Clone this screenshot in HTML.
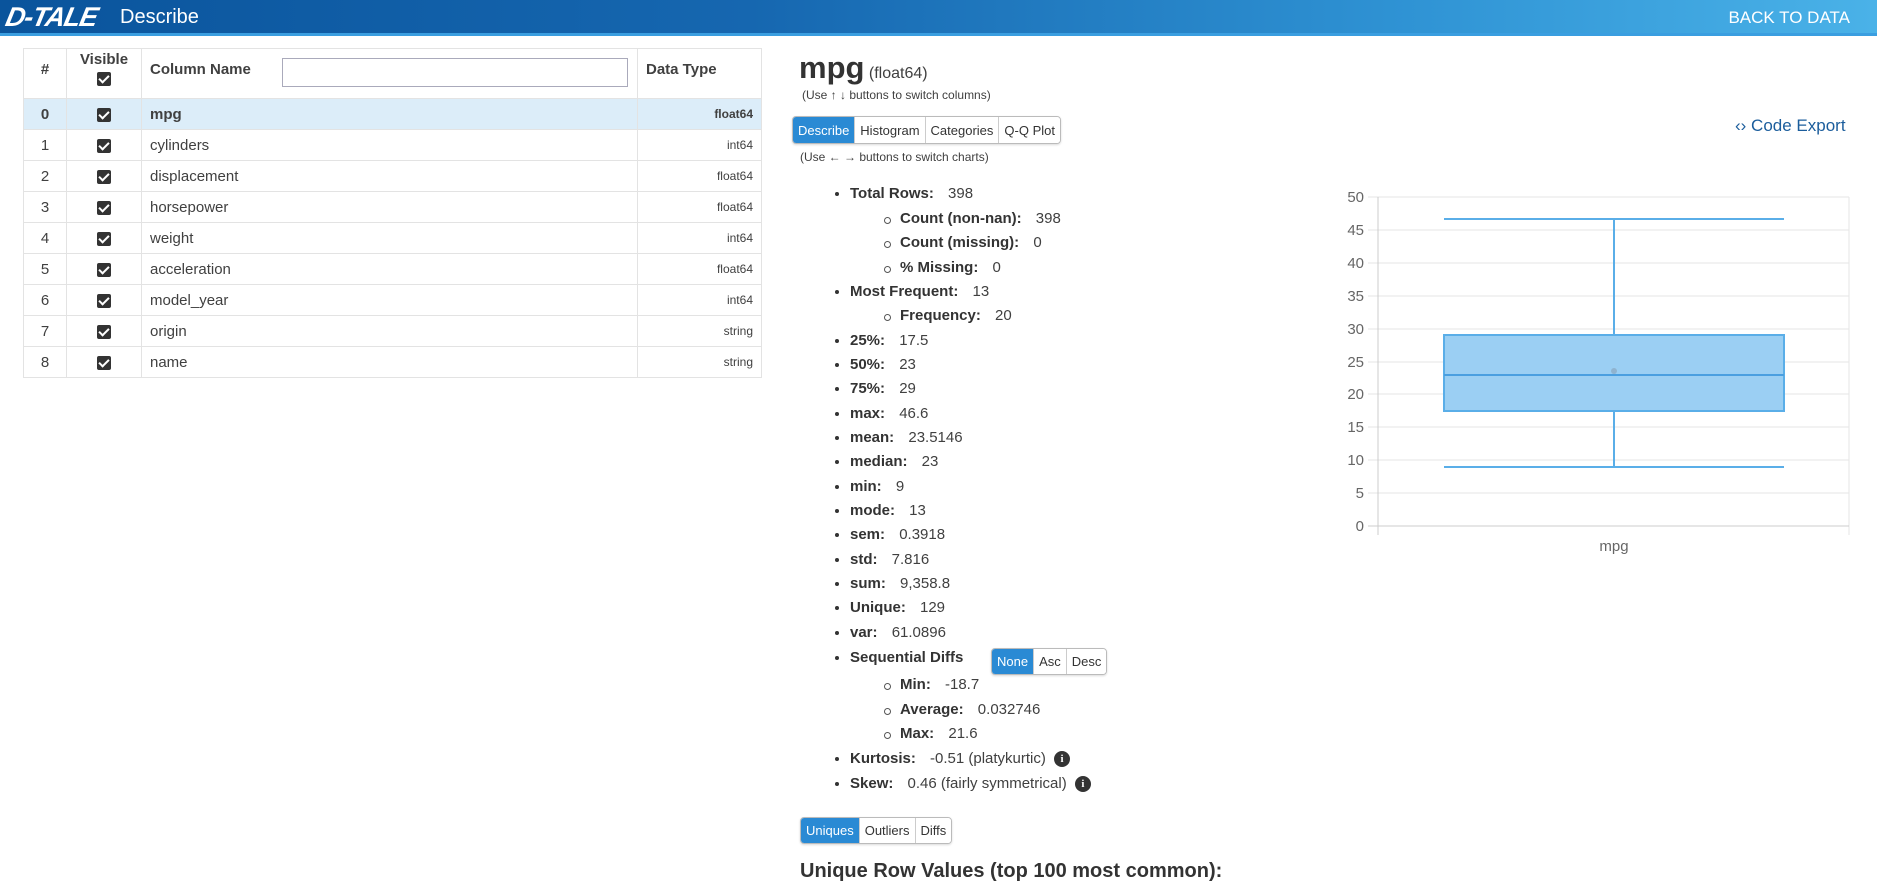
<!DOCTYPE html>
<html><head><meta charset="utf-8">
<style>
*{box-sizing:border-box;margin:0;padding:0}
body{width:1877px;height:881px;overflow:hidden;background:#fff;font-family:"Liberation Sans",sans-serif;color:#404040;position:relative}
.hdr{position:absolute;left:0;top:0;width:1877px;height:36px;background:linear-gradient(90deg,#0a549c 0%,#1667b0 40%,#2f93d4 75%,#4ab2e8 100%);border-bottom:3px solid #3a9ee0}
.logo{position:absolute;left:6px;top:2px;color:#fff;font:italic 900 27px "Liberation Sans",sans-serif;letter-spacing:-1px;transform:skewX(-12deg)}
.ttl{position:absolute;left:120px;top:6px;color:#fff;font-size:20px}
.back{position:absolute;right:27px;top:8px;color:#fff;font-size:17px}
table{position:absolute;left:23px;top:48px;width:739px;border-collapse:collapse;font-size:15px}
td,th{border:1px solid #e3e3e3;height:31px;padding:0 8px;color:#404040}
th{height:50px;text-align:left;font-weight:bold;vertical-align:top;padding-top:6px}
tr.sel td{background:#dcedf9}
.cb{display:inline-block;width:14px;height:14px;background:#333;border-radius:2px;position:relative;vertical-align:middle}
.cb:after{content:"";position:absolute;left:4px;top:1px;width:4px;height:8px;border:solid #fff;border-width:0 2px 2px 0;transform:rotate(45deg)}
.c0{width:43px;text-align:center}.c1{width:75px;text-align:center}.c3{width:124px;text-align:right;font-size:12px}
.btns{position:absolute;display:flex;border:1px solid #bbb;border-radius:4px;overflow:hidden;box-shadow:0 1px 2px rgba(0,0,0,.15)}
.btns span{padding:0 5px;font-size:13px;color:#333;border-left:1px solid #ccc;display:flex;align-items:center;background:#fff}
.btns span.a{background:#2a8ad4;color:#fff;border-left:none}
.li{position:absolute;font-size:15px;height:24px;line-height:24px;white-space:nowrap}
.li b{color:#333;margin-right:10px}
.li:before{content:"";position:absolute;left:-15px;top:10px;width:4px;height:4px;border-radius:50%;background:#333}
.li.s:before{left:-16px;top:10px;width:5px;height:5px;background:#fff;border:1px solid #555}
.info{display:inline-block;width:16px;height:16px;border-radius:50%;background:#333;color:#fff;font:bold 11px/16px "Liberation Serif",serif;text-align:center;vertical-align:middle;margin-left:4px}
</style></head><body>
<div class="hdr"><div class="logo">D-TALE</div><div class="ttl">Describe</div><div class="back">BACK TO DATA</div></div>

<table>
<tr><th class="c0" style="padding-top:12px">#</th><th class="c1" style="text-align:center;padding-top:2px">Visible<br><span class="cb" style="margin-top:4px"></span></th><th style="padding-top:12px">Column Name <span style="position:absolute;left:258px;top:9px;width:346px;height:29px;border:1px solid #aab;background:#fff"></span></th><th style="width:124px;padding-top:12px">Data Type</th></tr>
<tr class="sel"><td class="c0"><b>0</b></td><td class="c1"><span class="cb"></span></td><td><b>mpg</b></td><td class="c3"><b style="font-weight:600">float64</b></td></tr>
<tr><td class="c0">1</td><td class="c1"><span class="cb"></span></td><td>cylinders</td><td class="c3">int64</td></tr>
<tr><td class="c0">2</td><td class="c1"><span class="cb"></span></td><td>displacement</td><td class="c3">float64</td></tr>
<tr><td class="c0">3</td><td class="c1"><span class="cb"></span></td><td>horsepower</td><td class="c3">float64</td></tr>
<tr><td class="c0">4</td><td class="c1"><span class="cb"></span></td><td>weight</td><td class="c3">int64</td></tr>
<tr><td class="c0">5</td><td class="c1"><span class="cb"></span></td><td>acceleration</td><td class="c3">float64</td></tr>
<tr><td class="c0">6</td><td class="c1"><span class="cb"></span></td><td>model_year</td><td class="c3">int64</td></tr>
<tr><td class="c0">7</td><td class="c1"><span class="cb"></span></td><td>origin</td><td class="c3">string</td></tr>
<tr><td class="c0">8</td><td class="c1"><span class="cb"></span></td><td>name</td><td class="c3">string</td></tr>
</table>

<div style="position:absolute;left:799px;top:50px;white-space:nowrap"><span style="font-size:31px;font-weight:bold;color:#333">mpg</span> <span style="font-size:16px">(float64)</span></div>
<div style="position:absolute;left:802px;top:88px;font-size:12px">(Use ↑ ↓ buttons to switch columns)</div>
<div class="btns" style="left:792px;top:116px;height:28px"><span class="a">Describe</span><span>Histogram</span><span>Categories</span><span>Q-Q Plot</span></div>
<div style="position:absolute;left:800px;top:150px;font-size:12px">(Use ← → buttons to switch charts)</div>
<div style="position:absolute;left:1735px;top:116px;font-size:17px;color:#1b5d9c">‹› Code Export</div>

<div class="li" style="left:850px;top:182px"><b>Total Rows:</b> 398</div>
<div class="li s" style="left:900px;top:207px"><b>Count (non-nan):</b> 398</div>
<div class="li s" style="left:900px;top:231px"><b>Count (missing):</b> 0</div>
<div class="li s" style="left:900px;top:256px"><b>% Missing:</b> 0</div>
<div class="li" style="left:850px;top:280px"><b>Most Frequent:</b> 13</div>
<div class="li s" style="left:900px;top:304px"><b>Frequency:</b> 20</div>
<div class="li" style="left:850px;top:329px"><b>25%:</b> 17.5</div>
<div class="li" style="left:850px;top:353px"><b>50%:</b> 23</div>
<div class="li" style="left:850px;top:377px"><b>75%:</b> 29</div>
<div class="li" style="left:850px;top:402px"><b>max:</b> 46.6</div>
<div class="li" style="left:850px;top:426px"><b>mean:</b> 23.5146</div>
<div class="li" style="left:850px;top:450px"><b>median:</b> 23</div>
<div class="li" style="left:850px;top:475px"><b>min:</b> 9</div>
<div class="li" style="left:850px;top:499px"><b>mode:</b> 13</div>
<div class="li" style="left:850px;top:523px"><b>sem:</b> 0.3918</div>
<div class="li" style="left:850px;top:548px"><b>std:</b> 7.816</div>
<div class="li" style="left:850px;top:572px"><b>sum:</b> 9,358.8</div>
<div class="li" style="left:850px;top:596px"><b>Unique:</b> 129</div>
<div class="li" style="left:850px;top:621px"><b>var:</b> 61.0896</div>
<div class="li" style="left:850px;top:646px"><b>Sequential Diffs</b></div>
<div class="btns" style="left:991px;top:648px;height:27px"><span class="a">None</span><span>Asc</span><span>Desc</span></div>
<div class="li s" style="left:900px;top:673px"><b>Min:</b> -18.7</div>
<div class="li s" style="left:900px;top:698px"><b>Average:</b> 0.032746</div>
<div class="li s" style="left:900px;top:722px"><b>Max:</b> 21.6</div>
<div class="li" style="left:850px;top:747px"><b>Kurtosis:</b> -0.51 (platykurtic) <span class="info">i</span></div>
<div class="li" style="left:850px;top:772px"><b>Skew:</b> 0.46 (fairly symmetrical) <span class="info">i</span></div>

<div class="btns" style="left:800px;top:817px;height:27px"><span class="a">Uniques</span><span>Outliers</span><span>Diffs</span></div>
<div style="position:absolute;left:800px;top:860px;font-size:20px;font-weight:bold;color:#333;white-space:nowrap">Unique Row Values (top 100 most common):</div>

<svg style="position:absolute;left:0;top:0" width="1877" height="881" font-family="Liberation Sans,sans-serif">
<g stroke="#e6e6e6" stroke-width="1">
<line x1="1368" x2="1849" y1="197" y2="197"/><line x1="1368" x2="1849" y1="230" y2="230"/><line x1="1368" x2="1849" y1="263" y2="263"/><line x1="1368" x2="1849" y1="296" y2="296"/><line x1="1368" x2="1849" y1="329" y2="329"/><line x1="1368" x2="1849" y1="362" y2="362"/><line x1="1368" x2="1849" y1="394" y2="394"/><line x1="1368" x2="1849" y1="427" y2="427"/><line x1="1368" x2="1849" y1="460" y2="460"/><line x1="1368" x2="1849" y1="493" y2="493"/>
<line x1="1849" x2="1849" y1="197" y2="535"/>
</g>
<line x1="1368" x2="1849" y1="526" y2="526" stroke="#ccc"/>
<line x1="1378" x2="1378" y1="197" y2="535" stroke="#ccc"/>
<g fill="#666" font-size="15" text-anchor="end">
<text x="1364" y="202">50</text><text x="1364" y="235">45</text><text x="1364" y="268">40</text><text x="1364" y="301">35</text><text x="1364" y="334">30</text><text x="1364" y="367">25</text><text x="1364" y="399">20</text><text x="1364" y="432">15</text><text x="1364" y="465">10</text><text x="1364" y="498">5</text><text x="1364" y="531">0</text>
</g>
<text x="1614" y="551" fill="#666" font-size="15" text-anchor="middle">mpg</text>
<g stroke="#5aaee8" stroke-width="2">
<line x1="1444" x2="1784" y1="219" y2="219"/><line x1="1444" x2="1784" y1="467" y2="467"/>
<line x1="1614" x2="1614" y1="219" y2="335"/><line x1="1614" x2="1614" y1="411" y2="467"/>
<rect x="1444" y="335" width="340" height="76" fill="#9bcff3"/>
<line x1="1444" x2="1784" y1="375" y2="375" stroke="#4a9fe0"/>
</g>
<circle cx="1614" cy="371" r="3" fill="#8fb3cf"/>
</svg>
</body></html>
